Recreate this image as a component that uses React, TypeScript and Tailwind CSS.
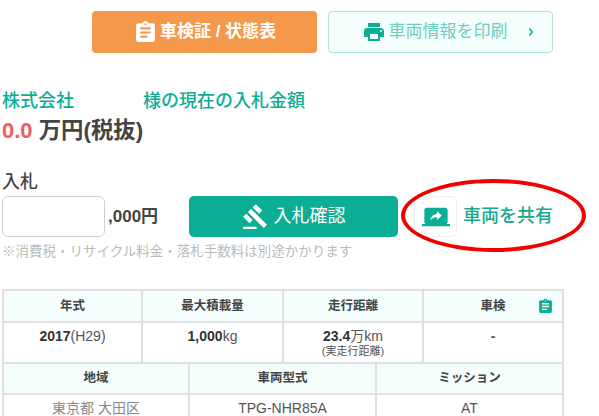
const font = "[font-family:'Liberation_Sans','Noto_Sans_CJK_JP',sans-serif]";

function ClipboardIcon({ className }: { className: string }) {
  return (
    <svg viewBox="0 0 24 24" className={className} fill="currentColor">
      <path d="M19 3h-4.180C14.400 1.840 13.300 1 12 1c-1.300 0-2.400.84-2.820 2H5c-1.100 0-2 .9-2 2v14c0 1.100.9 2 2 2h14c1.100 0 2-.9 2-2V5c0-1.100-.9-2-2-2zm-7 0c.55 0 1 .45 1 1s-.45 1-1 1-1-.45-1-1 .45-1 1-1zm2 14H7v-2h7v2zm3-4H7v-2h10v2zm0-4H7V7h10v2z" />
    </svg>
  );
}

function PrintIcon() {
  return (
    <svg viewBox="0 0 24 24" className="w-[24px] h-[24px] text-[#0bae94]" fill="currentColor">
      <path d="M19 8H5c-1.660 0-3 1.340-3 3v6h4v4h12v-4h4v-6c0-1.660-1.340-3-3-3zm-3 11H8v-5h8v5zm3-7c-.55 0-1-.45-1-1s.45-1 1-1 1 .45 1 1-.45 1-1 1zm-1-9H6v4h12V3z" />
    </svg>
  );
}

function GavelIcon() {
  return (
    <svg viewBox="0 0 24 24" className="w-[27px] h-[27px] text-white" fill="currentColor">
      <path d="M1 21h12v2H1zM5.245 8.070l2.830-2.827 14.140 14.142-2.828 2.828zM12.317 1l5.657 5.656-2.830 2.830-5.654-5.660zM3.825 9.485l5.657 5.657-2.828 2.828-5.657-5.657z" />
    </svg>
  );
}

function LaptopShareIcon() {
  return (
    <svg viewBox="0 0 24 24" className="w-[28px] h-[28px] text-[#0bae94]" fill="currentColor">
      <path d="M20 18c1.100 0 1.990-.9 1.990-2L22 6c0-1.110-.9-2-2-2H4c-1.110 0-2 .89-2 2v10c0 1.100.89 2 2 2H0v2h24v-2h-4zm-7-3.530v-2.190c-2.780 0-4.610.85-6 2.720.56-2.670 2.110-5.330 6-5.870V7l4 3.730-4 3.740z" />
    </svg>
  );
}

function Th({ children, className = "" }: { children: React.ReactNode; className?: string }) {
  return (
    <div className={`relative flex items-center justify-center bg-[#f3fefd] text-[12.5px] font-bold text-[#444] border-[#e0e0e0] ${className}`}>
      {children}
    </div>
  );
}

export default function App() {
  return (
    <div className={`relative w-[599px] h-[416px] overflow-hidden bg-white ${font}`}>
      {/* top buttons */}
      <div className="flex gap-[11px] pl-[92px] pt-[11px]">
        <button className="w-[225px] h-[42px] rounded-[4px] bg-[#f4994c] flex items-center justify-center gap-[2px] text-white text-[17px] font-bold">
          <ClipboardIcon className="w-[25px] h-[25px] text-white" />
          車検証 / 状態表
        </button>
        <button className="relative w-[225px] h-[42px] rounded-[4px] bg-[#f3fefd] border border-[#b5e6cf] flex items-center justify-center gap-[3px] pr-[12px] text-[#6fcdbd] text-[17px]">
          <PrintIcon />
          車両情報を印刷
          <svg viewBox="0 0 8 10" className="absolute right-[17px] top-[15px] w-[7px] h-[10px] text-[#0bae94]" fill="none" stroke="currentColor" strokeWidth="1.700">
            <path d="M1.500 1l3.500 4-3.500 4" />
          </svg>
        </button>
      </div>

      {/* current bid */}
      <div className="pl-[2px] pt-[36px]">
        <div className="flex gap-[69px] text-[18px] leading-[24px] font-medium text-[#0bae94]">
          <span>株式会社</span>
          <span>様の現在の入札金額</span>
        </div>
        <div className="text-[22px] leading-[36px] font-bold text-[#444]">
          <span className="text-[#f25c5c]">0.0</span> <span className="text-[22.4px]">万円(税抜)</span>
        </div>
      </div>

      {/* bid form */}
      <div className="pl-[2px] pt-[20px]">
        <div className="text-[18px] leading-[26px] font-medium text-[#444]">入札</div>
        <div className="mt-[1px] flex items-center">
          <div className="w-[103px] h-[41px] rounded-[6px] border border-[#cfcfcf] bg-white" />
          <span className="ml-[3px] w-[81px] text-[17px] font-bold text-[#444]">,000円</span>
          <button className="w-[209px] h-[41px] rounded-[5px] bg-[#0bae94] flex items-center justify-center gap-[5px] text-white text-[18px]">
            <GavelIcon />
            入札確認
          </button>
          <div className="ml-[16px] w-[43px] h-[41px] rounded-[5px] border border-[#eeeeee] flex items-center justify-center">
            <LaptopShareIcon />
          </div>
          <span className="ml-[6px] text-[18px] font-medium text-[#16a892]">車両を共有</span>
        </div>
        <div className="mt-[5px] text-[13.5px] leading-[20px] text-[#bbbbbb]">※消費税・リサイクル料金・落札手数料は別途かかります</div>
      </div>

      {/* spec table */}
      <div className="ml-[2px] mt-[27px] w-[562px] border-t-2 border-l-2 border-r-2 border-[#e0e0e0] text-[#555]">
        <div className="grid grid-cols-[139px_141px_140px_1fr] h-[32px] border-b-2 border-[#e0e0e0]">
          <Th className="border-r-2">年式</Th>
          <Th className="border-r-2">最大積載量</Th>
          <Th className="border-r-2">走行距離</Th>
          <Th>
            車検
            <span className="absolute right-[8px] top-[7px]">
              <ClipboardIcon className="w-[17px] h-[17px] text-[#0bae94]" />
            </span>
          </Th>
        </div>
        <div className="grid grid-cols-[139px_141px_140px_1fr] h-[41px] border-b-2 border-[#e0e0e0] text-center text-[14px]">
          <div className="border-r-2 border-[#e0e0e0] pt-[3px] leading-[20px]"><b className="text-[#333]">2017</b>(H29)</div>
          <div className="border-r-2 border-[#e0e0e0] pt-[3px] leading-[20px]"><b className="text-[#333]">1,000</b>kg</div>
          <div className="border-r-2 border-[#e0e0e0] pt-[3px] leading-[20px]">
            <b className="text-[#333]">23.4</b>万km
            <div className="text-[11px] leading-[11px]">(実走行距離)</div>
          </div>
          <div className="pt-[3px] leading-[20px] font-bold">-</div>
        </div>
        <div className="grid grid-cols-[186px_187px_1fr] h-[31px] border-b-2 border-[#e0e0e0]">
          <Th className="border-r-2">地域</Th>
          <Th className="border-r-2">車両型式</Th>
          <Th>ミッション</Th>
        </div>
        <div className="grid grid-cols-[186px_187px_1fr] h-[30px] text-center text-[14px] leading-[26px]">
          <div className="border-r-2 border-[#e0e0e0] text-[#888]">東京都 大田区</div>
          <div className="border-r-2 border-[#e0e0e0]">TPG-NHR85A</div>
          <div>AT</div>
        </div>
      </div>

      {/* red hand-drawn annotation */}
      <div className="absolute left-[401px] top-[179px] w-[185px] h-[73px] rounded-[50%] border-[4px] border-[#f00000]" />
    </div>
  );
}
